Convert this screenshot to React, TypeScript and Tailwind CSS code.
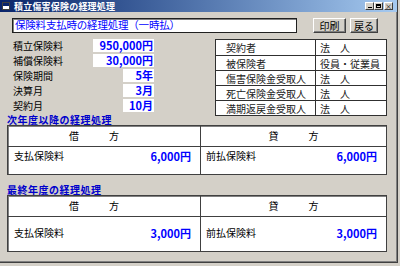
import React from 'react';

const font = { fontFamily: '"Noto Sans CJK JP", "Liberation Sans", sans-serif' };

const fields = [
  { label: '積立保険料', value: '950,000円', wide: true },
  { label: '補償保険料', value: '30,000円', wide: true },
  { label: '保険期間', value: '5年', wide: false },
  { label: '決算月', value: '3月', wide: false },
  { label: '契約月', value: '10月', wide: false },
];

const parties = [
  { role: '契約者', who: '法　人' },
  { role: '被保険者', who: '役員・従業員' },
  { role: '傷害保険金受取人', who: '法　人' },
  { role: '死亡保険金受取人', who: '法　人' },
  { role: '満期返戻金受取人', who: '法　人' },
];

function Journal({ amount, bodyPad }: { amount: string; bodyPad: string }) {
  return (
    <div className="ml-[7px] w-[380px] flex-1 flex flex-col bg-white border border-[#404040] shadow-[inset_1px_1px_0_#808080] text-[10px] leading-[12px] text-black">
      <div className="flex h-[21px] border-b border-[#404040]">
        <div className="w-[193px] flex items-center justify-center pr-[20px] border-r border-[#404040]">借　　　方</div>
        <div className="flex-1 flex items-center justify-center">貸　　　方</div>
      </div>
      <div className="flex flex-1">
        <div className={`w-[193px] flex justify-between items-start pl-[6px] pr-[9px] border-r border-[#404040] ${bodyPad}`}>
          <span>支払保険料</span>
          <span className="text-[#0000ff] font-bold text-[11px] leading-[12px]">{amount}</span>
        </div>
        <div className={`flex-1 flex justify-between items-start pl-[5px] pr-[9px] ${bodyPad}`}>
          <span>前払保険料</span>
          <span className="text-[#0000ff] font-bold text-[11px] leading-[12px]">{amount}</span>
        </div>
      </div>
    </div>
  );
}

function WinButton({ children }: { children: React.ReactNode }) {
  return (
    <div className="w-[9px] h-[8px] bg-[#d4d0c8] border-t border-l border-white border-r border-b border-r-[#404040] border-b-[#404040] flex items-center justify-center text-[7px] leading-none text-black">
      {children}
    </div>
  );
}

export default function App() {
  return (
    <div className="w-[400px] h-[266px] bg-[#d4d0c8] overflow-hidden" style={font}>
      <div className="w-[398px] h-[263px] border-r border-b border-[#404040] shadow-[inset_-1px_-1px_0_#808080]">
        <div className="h-[12px] flex items-center bg-gradient-to-r from-[#0a246a] to-[#a6caf0]">
          <div className="ml-[2px] w-[8px] h-[8px] bg-white border border-[#404040] relative">
            <div className="absolute left-0 top-0 w-[6px] h-[3px] bg-[#0a246a]" />
          </div>
          <span className="ml-[4px] text-white font-bold text-[9px] leading-none tracking-[0.2px]">積立傷害保険の経理処理</span>
          <div className="ml-auto mr-[4px] flex">
            <WinButton><span className="block w-[4px] h-[1px] bg-black mt-[3px]" /></WinButton>
            <WinButton><span className="block w-[5px] h-[4px] border border-black border-t-2" /></WinButton>
            <div className="ml-[1px]"><WinButton>×</WinButton></div>
          </div>
        </div>

        <div className="flex items-start mt-[6px]">
          <div className="ml-[12px] w-[285px] h-[15px] bg-white border border-[#202020] shadow-[inset_1px_1px_0_#808080] flex items-center pl-[2px] text-[#0000ff] text-[10.5px] tracking-[-0.2px] leading-none">
            保険料支払時の経理処理（一時払）
          </div>
          <button className="ml-[16px] w-[33px] h-[15px] bg-[#d4d0c8] border border-t-white border-l-white border-r-[#404040] border-b-[#404040] shadow-[inset_-1px_-1px_0_#808080] text-[10px] leading-none text-black">印刷</button>
          <button className="ml-[4px] w-[28px] h-[15px] bg-[#d4d0c8] border border-t-white border-l-white border-r-[#404040] border-b-[#404040] shadow-[inset_-1px_-1px_0_#808080] text-[10px] leading-none text-black">戻る</button>
        </div>

        <div className="flex items-start mt-[5px]">
          <div className="ml-[13px] w-[141px] flex flex-col">
            {fields.map((f) => (
              <div key={f.label} className="h-[15px] flex items-center justify-between">
                <span className="text-[10px] leading-[11px] text-black">{f.label}</span>
                <span className={`h-[13px] bg-white flex items-center justify-end pr-[1px] text-[#0000ff] font-bold text-[11px] leading-none ${f.wide ? 'w-[61px]' : 'w-[31px]'}`}>{f.value}</span>
              </div>
            ))}
          </div>
          <div className="ml-[61px] mt-[1px] w-[172px] bg-white border border-[#303030] text-[10px] leading-[11px] text-[#202020]">
            {parties.map((p, i) => (
              <div key={p.role} className={`flex h-[15px] ${i > 0 ? 'border-t border-[#303030]' : ''}`}>
                <div className="w-[100px] border-r border-[#303030] pl-[10px] flex items-center">{p.role}</div>
                <div className="flex-1 pl-[4px] flex items-center">{p.who}</div>
              </div>
            ))}
          </div>
        </div>

        <div className="ml-[7px] h-[9px] flex items-end text-[#0000cc] font-bold text-[10px] leading-[10px] tracking-[0.5px]">次年度以降の経理処理</div>
        <div className="h-[50px] flex flex-col">
          <Journal amount="6,000円" bodyPad="pt-[3px]" />
        </div>

        <div className="ml-[7px] mt-[10px] h-[10px] flex items-end text-[#0000cc] font-bold text-[10px] leading-[10px] tracking-[0.5px]">最終年度の経理処理</div>
        <div className="h-[57px] flex flex-col">
          <Journal amount="3,000円" bodyPad="pt-[10px]" />
        </div>
      </div>
    </div>
  );
}
